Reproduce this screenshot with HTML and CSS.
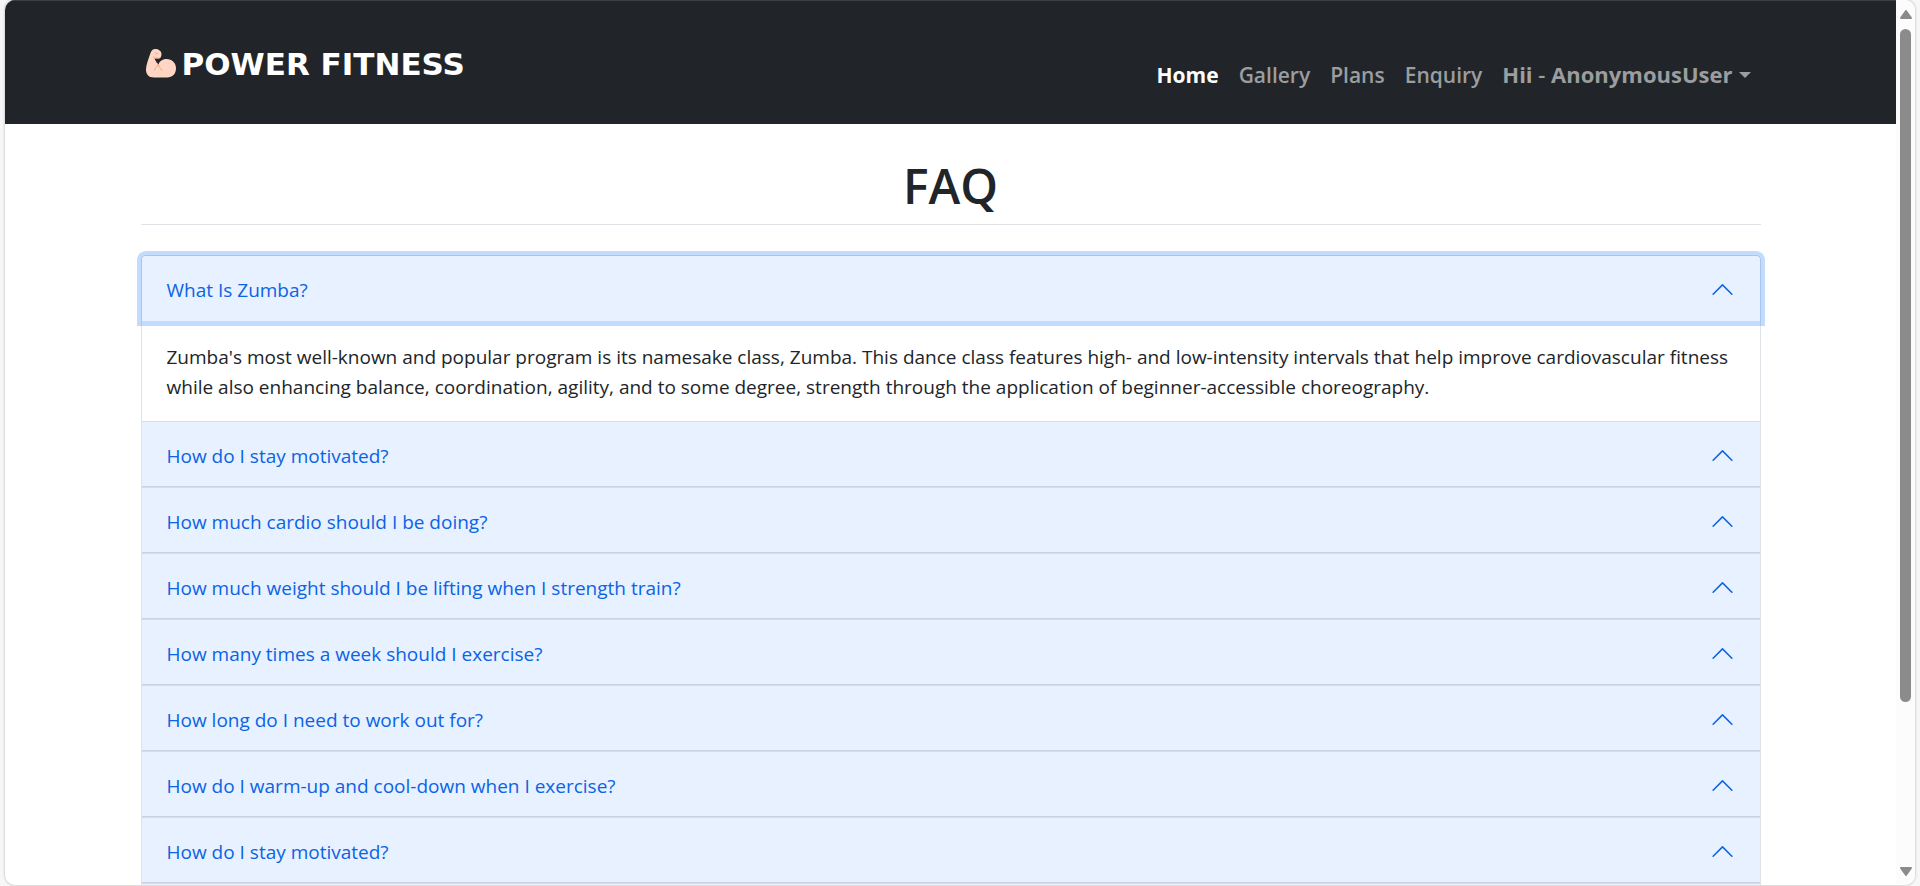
FILE: index.html
```html
<!DOCTYPE html>
<html lang="en">
<head>
<meta charset="utf-8">
<title>Power Fitness - FAQ</title>
<link rel="stylesheet" href="styles.css">
</head>
<body>
<svg class="defs" aria-hidden="true">
  <symbol id="chevron" viewBox="0 0 16 16"><path fill="currentColor" fill-rule="evenodd" d="M1.646 4.646a.5.5 0 0 1 .708 0L8 10.293l5.646-5.647a.5.5 0 0 1 .708.708l-6 6a.5.5 0 0 1-.708 0l-6-6a.5.5 0 0 1 0-.708z" transform="rotate(180 8 8)"/></symbol>
</svg>
<div class="window">
  <div class="page">
    <header class="navbar">
      <div class="container navbar-inner">
        <a class="brand" href="#">
          <svg class="brand-icon" viewBox="0 0 30 29" aria-hidden="true">
            <path fill="#ffd6c4" d="M9 0C12.500 0 15.500 2 15.500 5C15.500 7.500 14.500 9.500 12.500 9.500H8.500C9.500 12 11 14 12.500 16C13 12.500 16.500 10 20.500 10C26 10 30 14 30 19C30 25 26.500 28.500 21 28.500H8C2.500 28.500 0 25 0 20.500C0 16.500 2 11 4.500 4C5.500 1.500 7 0 9 0Z"/>
            <path fill="none" stroke="#f0a98a" stroke-width="1" d="M7 7.500Q8 9.500 11 9H13.500M9 3.500Q10 5 12 4.500M12.500 15.500Q10 18 8 21.500M11.500 14.500Q13.500 19 16.500 22"/>
          </svg>
          <span>POWER FITNESS</span>
        </a>
        <nav class="nav">
          <a class="nav-link active" href="#">Home</a>
          <a class="nav-link" href="#">Gallery</a>
          <a class="nav-link" href="#">Plans</a>
          <a class="nav-link" href="#">Enquiry</a>
          <a class="nav-link dropdown" href="#"><b>Hii</b> - <b>AnonymousUser</b><span class="caret"></span></a>
        </nav>
      </div>
    </header>
    <main class="container">
      <h1 class="title">FAQ</h1>
      <div class="accordion">
        <section class="item">
          <button class="question focused" type="button" aria-expanded="true">What Is Zumba?<svg class="chevron" aria-hidden="true"><use href="#chevron"/></svg></button>
          <p class="answer">Zumba's most well-known and popular program is its namesake class, Zumba. This dance class features high- and low-intensity intervals that help improve cardiovascular fitness while also enhancing balance, coordination, agility, and to some degree, strength through the application of beginner-accessible choreography.</p>
        </section>
        <section class="item"><button class="question" type="button">How do I stay motivated?<svg class="chevron" aria-hidden="true"><use href="#chevron"/></svg></button></section>
        <section class="item"><button class="question" type="button">How much cardio should I be doing?<svg class="chevron" aria-hidden="true"><use href="#chevron"/></svg></button></section>
        <section class="item"><button class="question" type="button">How much weight should I be lifting when I strength train?<svg class="chevron" aria-hidden="true"><use href="#chevron"/></svg></button></section>
        <section class="item"><button class="question" type="button">How many times a week should I exercise?<svg class="chevron" aria-hidden="true"><use href="#chevron"/></svg></button></section>
        <section class="item"><button class="question" type="button">How long do I need to work out for?<svg class="chevron" aria-hidden="true"><use href="#chevron"/></svg></button></section>
        <section class="item"><button class="question" type="button">How do I warm-up and cool-down when I exercise?<svg class="chevron" aria-hidden="true"><use href="#chevron"/></svg></button></section>
        <section class="item"><button class="question" type="button">How do I stay motivated?<svg class="chevron" aria-hidden="true"><use href="#chevron"/></svg></button></section>
        <section class="item next"></section>
      </div>
    </main>
  </div>
  <div class="scrollbar" aria-hidden="true">
    <svg class="arrow" viewBox="0 0 12 9"><path d="M6 1L11 8H1Z"/></svg>
    <div class="track"><div class="thumb"></div></div>
    <svg class="arrow" viewBox="0 0 12 9"><path d="M6 8L11 1H1Z"/></svg>
  </div>
</div>
</body>
</html>
```
FILE: styles.css
```css
* { box-sizing: border-box; }

body {
  margin: 0;
  height: 100vh;
  padding: 0 5px 1px;
  overflow: hidden;
  background: #f7f7f7;
  color: #212529;
  font: 19px/30px "Open Sans", "Noto Sans", sans-serif;
}

.defs { position: absolute; width: 0; height: 0; }

.window {
  display: flex;
  height: 100%;
  overflow: hidden;
  border-radius: 10px;
  background: #fff;
  box-shadow: 0 0 2px 1px #d6d6d6;
}

.page { flex: 1; min-width: 0; overflow: hidden; }

.container {
  width: 86%;
  max-width: 1620px;
  margin: 0 auto;
}

.navbar {
  padding: 40px 0 36px;
  border-top: 1px solid #3c4043;
  background: #212529;
}

.navbar-inner { display: flex; justify-content: space-between; }

.brand {
  display: flex;
  align-items: center;
  gap: 6px;
  height: 45px;
  padding-left: 5px;
  color: #fff;
  font: bold 31px/44px "DejaVu Sans", Verdana, sans-serif;
  text-decoration: none;
}

.brand-icon { width: 30px; height: 29px; }

.nav {
  display: flex;
  align-items: baseline;
  gap: 20px;
  padding: 18px 10px 0 0;
  height: 47px;
}

.navbar-inner { height: 47px; }

.nav-link {
  color: #9b9d9f;
  font-size: 21px;
  font-weight: 600;
  text-decoration: none;
}

.nav-link b { font-weight: 700; }
.nav-link.active { color: #fff; font-weight: 700; }
.nav-link.dropdown { font-size: 22px; }

.caret {
  display: inline-block;
  margin-left: 6px;
  vertical-align: 5px;
  border: 6px solid transparent;
  border-top-color: currentColor;
  border-bottom: 0;
}

.title {
  margin: 0 0 30px;
  padding: 31px 0 7px;
  border-bottom: 1px solid #dee2e6;
  font-size: 48px;
  font-weight: 600;
  line-height: 62px;
  text-align: center;
}

.accordion {
  border: 1px solid #dee2e6;
  border-bottom: 0;
  border-radius: 5px 5px 0 0;
}

.item { border-bottom: 1px solid #d9dde2; }

.question {
  display: flex;
  align-items: center;
  justify-content: space-between;
  width: 100%;
  height: 65px;
  padding: 2px 25px 0;
  border: 0;
  background: #e7f1ff;
  box-shadow: inset 0 -1px 0 rgba(0, 0, 0, .125);
  color: #0c63e4;
  font: inherit;
  text-align: left;
}

.focused {
  position: relative;
  border-radius: 4px 4px 0 0;
  box-shadow: 0 0 0 5px rgba(13, 110, 253, .25);
}

.chevron { width: 25px; height: 25px; margin-bottom: 1px; }

.answer { margin: 0; padding: 21px 25px 19px; }

.next { height: 65px; background: #e7f1ff; }

.scrollbar {
  display: flex;
  flex-direction: column;
  align-items: center;
  width: 19px;
  padding: 10px 0 9px;
  background: #fcfcfc;
}

.arrow {
  width: 12px;
  height: 9px;
  fill: #8b8b8b;
  stroke: #8b8b8b;
  stroke-width: 2;
  stroke-linejoin: round;
}

.track { flex: 1; padding: 10px 0 7px; }

.thumb {
  width: 11px;
  height: 81%;
  border-radius: 6px;
  background: #8b8b8b;
}
```
